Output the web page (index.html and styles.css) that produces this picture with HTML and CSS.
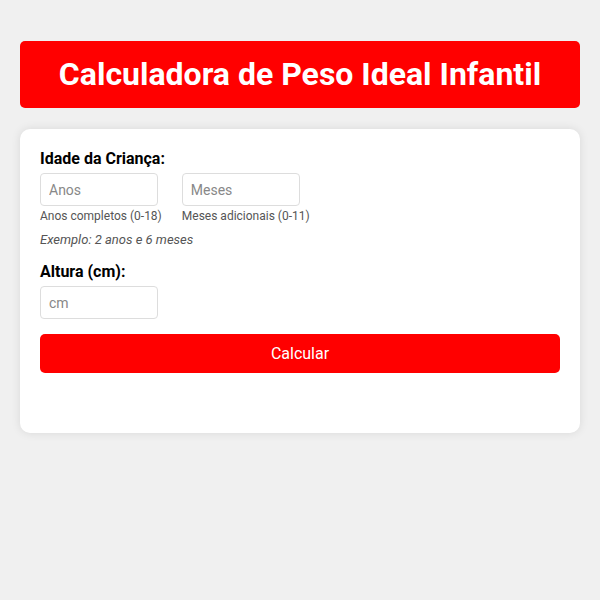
FILE: index.html
```html
<!DOCTYPE html>
<html>

<head>
    <title>Calculadora de Peso Ideal Infantil</title>
    <link rel="stylesheet" href="styles.css">
</head>

<body>

    <h1 id="title">Calculadora de Peso Ideal Infantil</h1>

    <div id="calc-container">
        <div class="form-group">
            <label class="field-label">Idade da Criança:</label>
            <div class="age-row">
                <div class="age-col">
                    <input type="number" class="field-input" placeholder="Anos">
                    <div class="hint">Anos completos (0-18)</div>
                </div>
                <div class="age-col">
                    <input type="number" class="field-input" placeholder="Meses">
                    <div class="hint">Meses adicionais (0-11)</div>
                </div>
            </div>
            <div class="example">Exemplo: 2 anos e 6 meses</div>
        </div>

        <div class="form-group">
            <label class="field-label">Altura (cm):</label>
            <input type="number" class="field-input" placeholder="cm">
        </div>

        <button id="calc-btn">Calcular</button>

        <div id="result"></div>
    </div>

</body>

</html>
```

FILE: styles.css
```css
body {
    margin: 0;
    padding: 20px;
    font-family: Roboto, "Liberation Sans", Arial, sans-serif;
    background-color: #f0f0f0;
}

#title {
    margin: 21px 0;
    padding: 15px;
    font-size: 32px;
    line-height: 37px;
    text-align: center;
    color: white;
    background-color: #ff0000;
    border-radius: 5px;
}

#calc-container {
    padding: 20px;
    background-color: white;
    border-radius: 10px;
    box-shadow: 0 0 10px rgba(0, 0, 0, 0.1);
}

.form-group {
    margin-bottom: 14px;
}

.field-label {
    display: block;
    margin-bottom: 5px;
    font-size: 16px;
    font-weight: bold;
    line-height: 19px;
    color: #000;
}

.age-row {
    display: flex;
    gap: 20px;
}

.field-input {
    display: block;
    box-sizing: border-box;
    width: 118px;
    height: 33px;
    padding: 8px;
    font-family: inherit;
    font-size: 14px;
    border: 1px solid #ddd;
    border-radius: 4px;
}

.field-input::placeholder {
    color: #888;
}

.hint {
    margin-top: 3px;
    font-size: 12px;
    line-height: 14px;
    color: #555;
}

.example {
    margin-top: 9px;
    font-size: 13px;
    line-height: 16px;
    font-style: italic;
    color: #555;
}

#calc-btn {
    display: block;
    width: 100%;
    margin-top: 15px;
    padding: 10px;
    font-family: inherit;
    font-size: 16px;
    color: white;
    background-color: #ff0000;
    border: none;
    border-radius: 5px;
    cursor: pointer;
}

#result {
    margin-top: 20px;
    padding: 10px;
}
```
